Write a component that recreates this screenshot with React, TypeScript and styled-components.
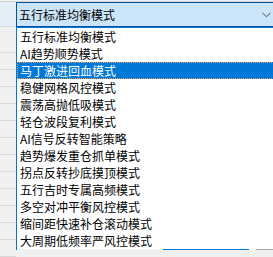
import React from "react";
import styled, { createGlobalStyle } from "styled-components";

const Global = createGlobalStyle`
  html, body { margin: 0; padding: 0; background: #f0f0f0; overflow: hidden; }
  body { font-family: "Noto Sans CJK SC", "Microsoft YaHei", sans-serif; }
`;

const Page = styled.div`
  position: relative;
  width: 273px;
  height: 257px;
  overflow: hidden;
  display: flex;
  flex-direction: column;
`;

const TopStrip = styled.div`
  height: 2px;
  background: #f0f0f0;
  border-bottom: 1px solid #d4d4d4;
`;

const Body = styled.div`
  display: flex;
  flex: 1;
`;

const RowHeaders = styled.div`
  width: 16px;
  flex: none;
  display: flex;
  flex-direction: column;
`;

const HeaderCell = styled.div<{ $h: number; $active?: boolean }>`
  height: ${(p) => p.$h}px;
  box-sizing: border-box;
  background: ${(p) => (p.$active ? "#e4eef8" : "#f0f0f0")};
  border-bottom: 1px solid #d8d8d8;
`;

const ComboArea = styled.div`
  position: relative;
  flex: 1;
  min-width: 0;
`;

const Combo = styled.div`
  box-sizing: border-box;
  width: 100%;
  height: 25px;
  border: 1px solid #005499;
  border-right: none;
  background: #cce4f7;
  display: flex;
  align-items: center;
  padding-left: 2px;
  font-size: 12px;
  color: #000;
`;

const ComboText = styled.span`
  flex: 1;
  line-height: 17px;
`;

const Chevron = styled.svg`
  width: 9px;
  height: 6px;
  margin-right: 2px;
`;

const DropList = styled.ul`
  position: absolute;
  left: 0;
  top: 25px;
  margin: 0;
  padding: 0;
  list-style: none;
  width: 270px;
  box-sizing: border-box;
  background: #fff;
  border-top: 1px solid #0078d7;
  border-left: 1px solid #0078d7;
`;

const Item = styled.li<{ $selected?: boolean }>`
  box-sizing: border-box;
  height: 17px;
  line-height: 15px;
  padding-left: 2px;
  font-size: 12px;
  white-space: nowrap;
  color: ${(p) => (p.$selected ? "#fff" : "#000")};
  background: ${(p) => (p.$selected ? "#0078d7" : "transparent")};
  border: 1px dotted ${(p) => (p.$selected ? "#e9a25a" : "transparent")};
`;

const BottomEdge = styled.li`
  height: 1px;
  background: linear-gradient(
    to right,
    #f4f4f4 0 146px,
    #0078d7 146px 232px,
    transparent 232px 239px,
    #a8a8a8 239px
  );
`;

const options = [
  "五行标准均衡模式",
  "AI趋势顺势模式",
  "马丁激进回血模式",
  "稳健网格风控模式",
  "震荡高抛低吸模式",
  "轻仓波段复利模式",
  "AI信号反转智能策略",
  "趋势爆发重仓抓单模式",
  "拐点反转抄底摸顶模式",
  "五行吉时专属高频模式",
  "多空对冲平衡风控模式",
  "缩间距快速补仓滚动模式",
  "大周期低频率严风控模式",
];

const headerHeights = [25, 26, 17, 17, 17, 17, 17, 17, 17, 17, 17, 17, 17, 17];

export default function App() {
  return (
    <>
      <Global />
      <Page>
        <TopStrip />
        <Body>
          <RowHeaders>
            {headerHeights.map((h, i) => (
              <HeaderCell key={i} $h={h} $active={i === 0} />
            ))}
          </RowHeaders>
          <ComboArea>
            <Combo>
              <ComboText>五行标准均衡模式</ComboText>
              <Chevron viewBox="0 0 9 6">
                <path d="M0.5 0.8 L4.5 4.8 L8.5 0.8" fill="none" stroke="#444" strokeWidth="1" />
              </Chevron>
            </Combo>
            <DropList>
              {options.map((o, i) => (
                <Item key={o} $selected={i === 2}>
                  {o}
                </Item>
              ))}
              <BottomEdge />
            </DropList>
          </ComboArea>
        </Body>
      </Page>
    </>
  );
}
